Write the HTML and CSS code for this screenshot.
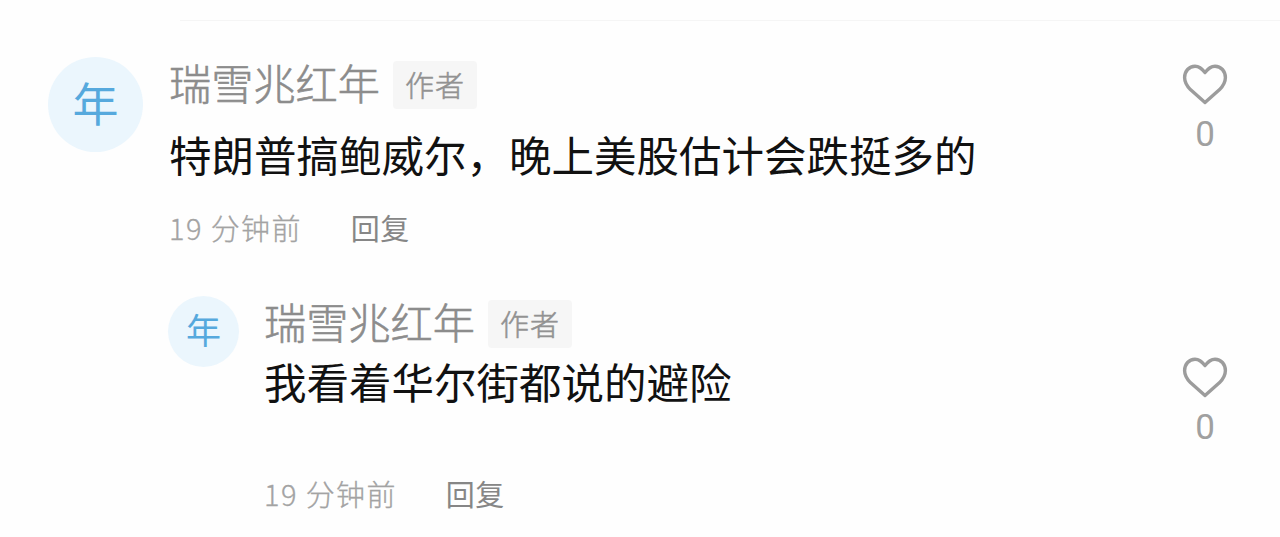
FILE: index.html
```html
<!doctype html>
<html lang="zh-CN">
  <head>
    <meta charset="UTF-8" />
    <title>评论</title>
    <link rel="stylesheet" href="styles.css">
  </head>
  <body>
    <div class="comments">
      <div class="comment">
        <div class="avatar">年</div>
        <div class="main">
          <div class="user">
            <span class="name">瑞雪兆红年</span>
            <span class="tag">作者</span>
          </div>
          <p class="text">特朗普搞鲍威尔，晚上美股估计会跌挺多的</p>
          <div class="meta">
            <span class="time">19 分钟前</span>
            <span class="reply-btn">回复</span>
          </div>
        </div>
        <div class="like">
          <svg class="heart" viewBox="0 0 46 42">
            <path d="M23 9.6 C19.8 5.2 16.6 3.2 13 3.2 C7 3.2 2.6 8.2 2.6 14.6 C2.6 19.4 4.8 23 8.4 26.6 L23 39.6 L37.6 26.6 C41.2 23 43.4 19.4 43.4 14.6 C43.4 8.2 39 3.2 33 3.2 C29.4 3.2 26.2 5.2 23 9.6 Z" />
          </svg>
          <span class="count">0</span>
        </div>
      </div>

      <div class="comment reply">
        <div class="avatar">年</div>
        <div class="main">
          <div class="user">
            <span class="name">瑞雪兆红年</span>
            <span class="tag">作者</span>
          </div>
          <p class="text">我看着华尔街都说的避险</p>
          <div class="meta">
            <span class="time">19 分钟前</span>
            <span class="reply-btn">回复</span>
          </div>
        </div>
        <div class="like">
          <svg class="heart" viewBox="0 0 46 42">
            <path d="M23 9.6 C19.8 5.2 16.6 3.2 13 3.2 C7 3.2 2.6 8.2 2.6 14.6 C2.6 19.4 4.8 23 8.4 26.6 L23 39.6 L37.6 26.6 C41.2 23 43.4 19.4 43.4 14.6 C43.4 8.2 39 3.2 33 3.2 C29.4 3.2 26.2 5.2 23 9.6 Z" />
          </svg>
          <span class="count">0</span>
        </div>
      </div>
    </div>
  </body>
</html>
```
FILE: styles.css
```css
* {
  box-sizing: border-box;
}

body {
  margin: 0;
  background: #fefefe;
  font-family: "Noto Sans CJK SC", sans-serif;
  color: #111;
}

.comments {
  height: 537px;
  padding-top: 20px;
  overflow: hidden;
}

.comment {
  display: flex;
  align-items: flex-start;
  height: 240px;
  padding: 37px 52px 0 48px;
}

.comments::before {
  content: "";
  display: block;
  height: 1px;
  margin: 0 0 -1px 180px;
  background: #f5f5f5;
}

.avatar {
  flex: none;
  width: 95px;
  height: 95px;
  margin-right: 26px;
  border-radius: 50%;
  background: #ebf6fd;
  color: #56a9dd;
  font-size: 46px;
  line-height: 88px;
  text-align: center;
}

.main {
  flex: 1;
}

.user {
  display: flex;
  align-items: center;
  height: 56px;
}

.name {
  height: 56px;
  color: #8c8c8c;
  font-size: 42.2px;
  font-weight: 300;
  line-height: 50px;
  -webkit-text-stroke: 0.6px #8c8c8c;
}

.tag {
  width: 84px;
  height: 48px;
  margin-left: 13px;
  padding-left: 12px;
  border-radius: 4px;
  background: #f6f6f6;
  color: #929292;
  font-size: 29px;
  font-weight: 300;
  letter-spacing: 1px;
  line-height: 46px;
  -webkit-text-stroke: 0.5px #929292;
}

.text {
  margin: 11px 0 0;
  font-size: 42.5px;
  line-height: 60px;
}

.meta {
  display: flex;
  gap: 49px;
  margin-top: 23px;
  font-size: 29px;
  line-height: 40px;
}

.time {
  color: #a3a3a3;
  font-weight: 300;
  letter-spacing: 1.4px;
  -webkit-text-stroke: 0.3px #a3a3a3;
}

.reply-btn {
  color: #868686;
  letter-spacing: 0.5px;
}

.like {
  display: flex;
  flex-direction: column;
  align-items: center;
  width: 46px;
  padding-top: 6px;
}

.heart {
  width: 46px;
  height: 42px;
  fill: none;
  stroke: #9c9c9c;
  stroke-width: 3.4;
  stroke-linejoin: round;
}

.count {
  margin-top: 11px;
  color: #a0a0a0;
  font-family: Roboto, sans-serif;
  font-size: 35px;
  line-height: 38px;
}

/* nested reply */
.reply {
  height: 270px;
  padding: 36px 52px 0 168px;
}

.reply .avatar {
  width: 71px;
  height: 71px;
  margin-right: 25px;
  font-size: 35px;
  line-height: 66px;
}

.reply .text {
  margin-top: -1px;
}

.reply .meta {
  margin-top: 62px;
}

.reply .like {
  padding-top: 60px;
}
```
